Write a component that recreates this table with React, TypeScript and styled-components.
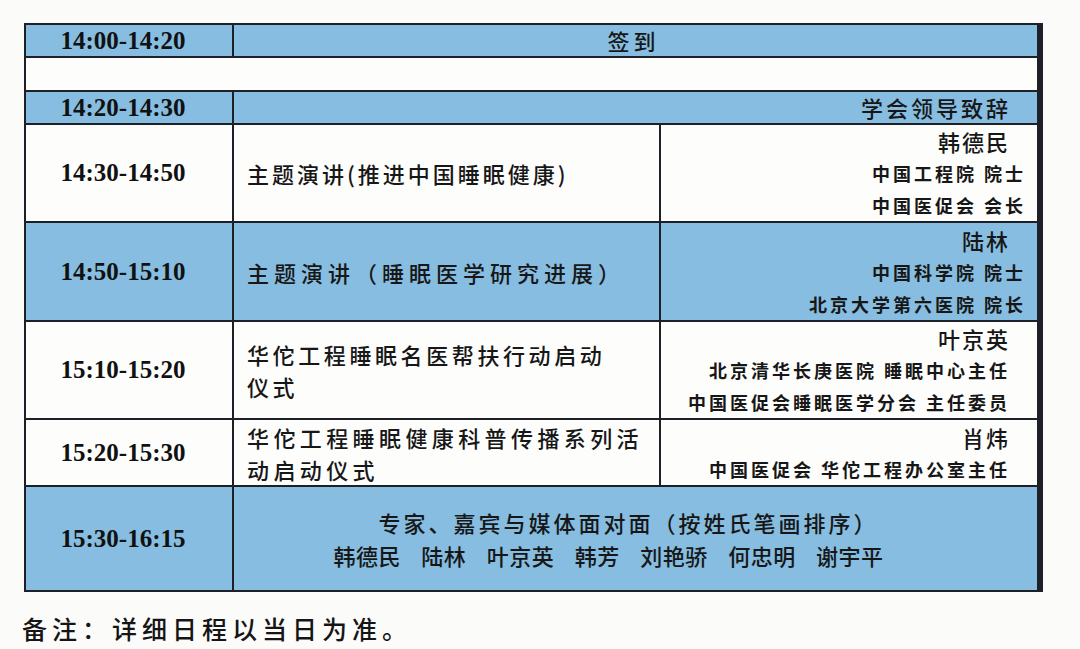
import React from 'react'
import styled, { createGlobalStyle } from 'styled-components'

const GlobalStyle = createGlobalStyle`
  html, body {
    margin: 0;
    padding: 0;
    background: #fbfbf9;
  }
  body {
    font-family: "Noto Sans CJK SC", "Noto Sans", sans-serif;
    color: #171717;
  }
`

const Page = styled.div`
  width: 1080px;
  height: 649px;
  box-sizing: border-box;
  padding: 23px 0 0 22px;
  overflow: hidden;
`

const Table = styled.div`
  display: grid;
  width: 1015px;
  margin-left: 2px;
  grid-template-columns: 206px 425px 376px;
  grid-template-rows: 31px 32px 31px 96px 97px 96px 65px 103px;
  gap: 2px;
  border: 2px solid #1d2027;
  background: #1d2027;
`

const Cell = styled.div<{ $blue?: boolean; $span?: number }>`
  grid-column: span ${(p) => p.$span ?? 1};
  display: flex;
  flex-direction: column;
  justify-content: center;
  min-width: 0;
  background: ${(p) => (p.$blue ? '#86bde0' : '#fdfdfc')};
`

const TimeCell = styled(Cell)`
  align-items: center;
  padding-right: 12px;
  font-family: "Liberation Serif", "Times New Roman", serif;
  font-weight: 700;
  font-size: 25px;
  color: #111;
`

const TopicCell = styled(Cell)`
  align-items: flex-start;
  padding-left: 13px;
`

const TopicLine = styled.div<{ $spacing?: number }>`
  font-size: 22px;
  font-weight: 500;
  line-height: 32px;
  letter-spacing: ${(p) => p.$spacing ?? 4}px;
  white-space: nowrap;
`

const SpeakerCell = styled(Cell)`
  align-items: flex-end;
`

const Name = styled.div`
  font-size: 22px;
  font-weight: 500;
  line-height: 32px;
  letter-spacing: 2px;
  padding-right: 27px;
  white-space: nowrap;
`

const Affil = styled.div<{ $inset: number }>`
  font-size: 18px;
  font-weight: 700;
  line-height: 32px;
  letter-spacing: 3px;
  padding-right: ${(p) => p.$inset}px;
  white-space: nowrap;
`

const WideCell = styled(Cell)<{ $align: 'center' | 'right' }>`
  align-items: ${(p) => (p.$align === 'center' ? 'center' : 'flex-end')};
`

const WideText = styled.div<{ $pad?: number; $spacing?: number; $words?: number }>`
  font-size: 22px;
  font-weight: 500;
  line-height: 33px;
  letter-spacing: ${(p) => p.$spacing ?? 3}px;
  word-spacing: ${(p) => p.$words ?? 0}px;
  padding-right: ${(p) => p.$pad ?? 0}px;
  white-space: nowrap;
`

const Note = styled.div`
  margin-top: 18px;
  font-size: 25px;
  font-weight: 500;
  line-height: 36px;
  letter-spacing: 5px;
  color: #151515;
`

type Talk = {
  time: string
  blue: boolean
  topic: string[]
  spacing?: number
  name: string
  affil: string[]
  inset: number
}

const talks: Talk[] = [
  {
    time: '14:30-14:50',
    blue: false,
    topic: ['主题演讲(推进中国睡眠健康)'],
    spacing: 3,
    name: '韩德民',
    affil: ['中国工程院 院士', '中国医促会 会长'],
    inset: 11,
  },
  {
    time: '14:50-15:10',
    blue: true,
    topic: ['主题演讲（睡眠医学研究进展）'],
    spacing: 5,
    name: '陆林',
    affil: ['中国科学院 院士', '北京大学第六医院 院长'],
    inset: 11,
  },
  {
    time: '15:10-15:20',
    blue: false,
    topic: ['华佗工程睡眠名医帮扶行动启动', '仪式'],
    spacing: 3.6,
    name: '叶京英',
    affil: ['北京清华长庚医院 睡眠中心主任', '中国医促会睡眠医学分会 主任委员'],
    inset: 27,
  },
  {
    time: '15:20-15:30',
    blue: false,
    topic: ['华佗工程睡眠健康科普传播系列活', '动启动仪式'],
    spacing: 4.4,
    name: '肖炜',
    affil: ['中国医促会 华佗工程办公室主任'],
    inset: 27,
  },
]

export default function App() {
  return (
    <Page>
      <GlobalStyle />
      <Table>
        <TimeCell $blue>14:00-14:20</TimeCell>
        <WideCell $blue $span={2} $align="center">
          <WideText $pad={4} $spacing={4}>签到</WideText>
        </WideCell>

        <Cell $span={3} />

        <TimeCell $blue>14:20-14:30</TimeCell>
        <WideCell $blue $span={2} $align="right">
          <WideText $pad={26}>学会领导致辞</WideText>
        </WideCell>

        {talks.map((t) => (
          <React.Fragment key={t.time}>
            <TimeCell $blue={t.blue}>{t.time}</TimeCell>
            <TopicCell $blue={t.blue}>
              {t.topic.map((line) => (
                <TopicLine key={line} $spacing={t.spacing}>
                  {line}
                </TopicLine>
              ))}
            </TopicCell>
            <SpeakerCell $blue={t.blue}>
              <Name>{t.name}</Name>
              {t.affil.map((a) => (
                <Affil key={a} $inset={t.inset}>
                  {a}
                </Affil>
              ))}
            </SpeakerCell>
          </React.Fragment>
        ))}

        <TimeCell $blue>15:30-16:15</TimeCell>
        <WideCell $blue $span={2} $align="center">
          <WideText $pad={14} $spacing={3}>
            专家、嘉宾与媒体面对面（按姓氏笔画排序）
          </WideText>
          <WideText $pad={54} $spacing={0.5} $words={15}>
            韩德民 陆林 叶京英 韩芳 刘艳骄 何忠明 谢宇平
          </WideText>
        </WideCell>
      </Table>
      <Note>备注：详细日程以当日为准。</Note>
    </Page>
  )
}
